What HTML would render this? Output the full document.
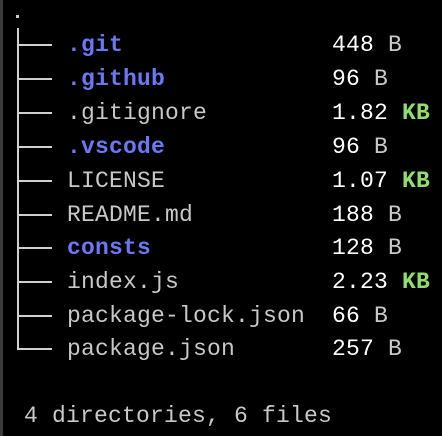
<!DOCTYPE html>
<html><head><style>
html,body{margin:0;padding:0;background:#000;width:442px;height:436px;overflow:hidden}
body{position:relative;font-family:"Liberation Mono",monospace;font-size:23px;letter-spacing:0.2px;color:#c8c8c8}
.bl{position:absolute;left:0;top:0;width:3px;height:436px;background:#3a3a3a}
.r{position:absolute;left:67px;height:34px;line-height:34px;white-space:pre}
.s{position:absolute;left:332px;height:34px;line-height:34px;white-space:pre;color:#fff}
.d{color:#6b78f5;font-weight:bold}
.k{color:#8ee06a;font-weight:bold}
.u{color:#c8c8c8}
.v{position:absolute;left:17px;top:28px;width:2px;height:322px;background:#d0d0d0}
.h{position:absolute;left:17px;width:35px;height:2px;background:#d0d0d0}
.dot{position:absolute;left:16px;top:15px;width:3px;height:3px;background:#c8c8c8}
</style></head><body>
<div class="bl"></div>
<div class="dot"></div>
<div class="v"></div>
<div class="h" style="top:44px"></div>
<div class="h" style="top:78px"></div>
<div class="h" style="top:112px"></div>
<div class="h" style="top:146px"></div>
<div class="h" style="top:180px"></div>
<div class="h" style="top:214px"></div>
<div class="h" style="top:247px"></div>
<div class="h" style="top:281px"></div>
<div class="h" style="top:315px"></div>
<div class="h" style="top:348px"></div>
<div class="r d" style="top:28px">.git</div><div class="s" style="top:28px">448 <span class="u">B</span></div>
<div class="r d" style="top:62px">.github</div><div class="s" style="top:62px">96 <span class="u">B</span></div>
<div class="r" style="top:96px">.gitignore</div><div class="s" style="top:96px">1.82 <span class="k">KB</span></div>
<div class="r d" style="top:130px">.vscode</div><div class="s" style="top:130px">96 <span class="u">B</span></div>
<div class="r" style="top:164px">LICENSE</div><div class="s" style="top:164px">1.07 <span class="k">KB</span></div>
<div class="r" style="top:198px">README.md</div><div class="s" style="top:198px">188 <span class="u">B</span></div>
<div class="r d" style="top:231px">consts</div><div class="s" style="top:231px">128 <span class="u">B</span></div>
<div class="r" style="top:265px">index.js</div><div class="s" style="top:265px">2.23 <span class="k">KB</span></div>
<div class="r" style="top:299px">package-lock.json</div><div class="s" style="top:299px">66 <span class="u">B</span></div>
<div class="r" style="top:332px">package.json</div><div class="s" style="top:332px">257 <span class="u">B</span></div>
<div class="r" style="left:24px;top:399px">4 directories, 6 files</div>
</body></html>
